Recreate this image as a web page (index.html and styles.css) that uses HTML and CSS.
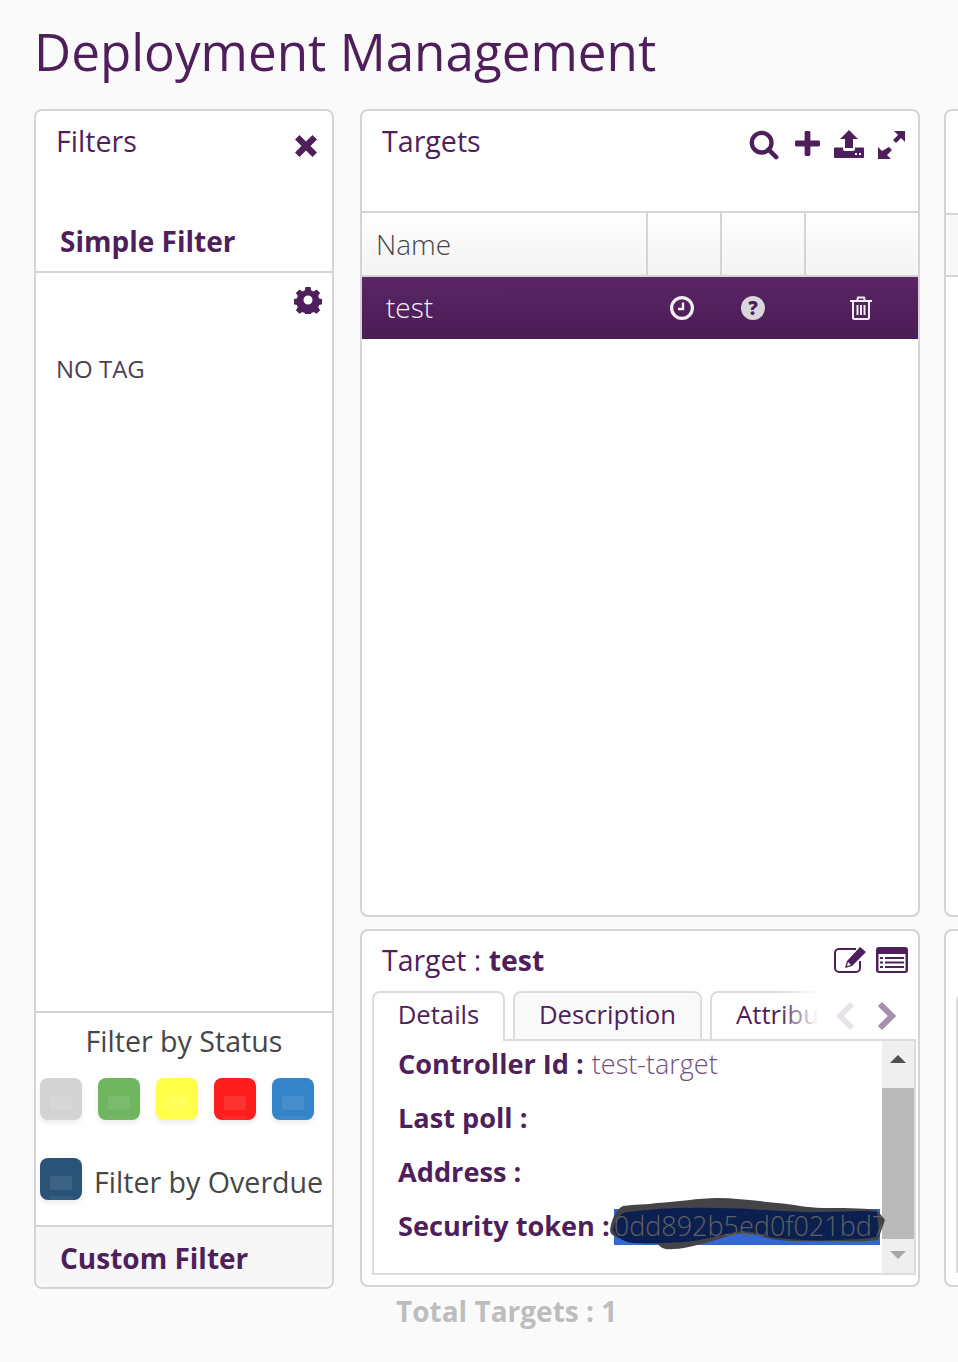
FILE: index.html
```html
<!DOCTYPE html>
<html lang="en">
<head>
<meta charset="utf-8">
<title>Deployment Management</title>
<link rel="stylesheet" href="styles.css">
</head>
<body>
<div class="page">
  <h1 class="title">Deployment Management</h1>
  <div class="layout">
    <section class="panel filters">
      <div class="filters-head">
        <span class="panel-title">Filters</span>
        <svg class="ic-close" viewBox="0 0 24 24"><path fill="#4f1f5c" d="M5.500 1 12 7.500 18.500 1 23 5.500 16.500 12 23 18.500 18.500 23 12 16.500 5.500 23 1 18.500 7.500 12 1 5.500z"/></svg>
      </div>
      <div class="simple-head">Simple Filter</div>
      <div class="tag-area">
        <div class="gear-row">
          <svg class="ic-gear" viewBox="0 0 28 28"><path fill="#4f1f5c" fill-rule="evenodd" d="M11.500 1h5l.8 3.500 2.300 1 3-1.900 3.500 3.500-1.900 3 1 2.300 3.300.8v5l-3.300.8-1 2.300 1.900 3-3.500 3.500-3-1.900-2.300 1-.8 3.400h-5l-.8-3.400-2.300-1-3 1.900-3.500-3.500 1.900-3-1-2.300-3.300-.8v-5l3.300-.8 1-2.300-1.900-3 3.500-3.500 3 1.900 2.300-1zM14 9.500a4.500 4.500 0 1 0 0 9 4.500 4.500 0 0 0 0-9z"/></svg>
        </div>
        <div class="no-tag">NO TAG</div>
      </div>
      <div class="status-area">
        <div class="status-title">Filter by Status</div>
        <div class="swatches">
          <span class="swatch sw-grey"></span>
          <span class="swatch sw-green"></span>
          <span class="swatch sw-yellow"></span>
          <span class="swatch sw-red"></span>
          <span class="swatch sw-blue"></span>
        </div>
        <div class="overdue">
          <span class="swatch sw-navy"></span>
          <span class="overdue-label">Filter by Overdue</span>
        </div>
      </div>
      <div class="custom-head">Custom Filter</div>
    </section>

    <div class="middle">
      <section class="panel targets">
        <div class="targets-head">
          <span class="panel-title">Targets</span>
          <div class="tools">
            <svg class="ic-t ic-search" viewBox="0 0 32 32"><circle cx="13.500" cy="13.500" r="10.500" fill="none" stroke="#4f1f5c" stroke-width="4.600"/><path d="M21 21l8 8" stroke="#4f1f5c" stroke-width="4.800" stroke-linecap="round"/></svg>
            <svg class="ic-t ic-plus" viewBox="0 0 26 26"><path fill="#4f1f5c" d="M10 1.500a1.500 1.500 0 0 1 1.500-1.500h3a1.500 1.500 0 0 1 1.500 1.500V10h8.500A1.500 1.500 0 0 1 26 11.500v3a1.500 1.500 0 0 1-1.500 1.500H16v8.500a1.500 1.500 0 0 1-1.500 1.500h-3a1.500 1.500 0 0 1-1.500-1.500V16H1.500A1.500 1.500 0 0 1 0 14.500v-3A1.500 1.500 0 0 1 1.500 10H10z"/></svg>
            <svg class="ic-t ic-upload" viewBox="0 0 30 28"><path fill="#4f1f5c" fill-rule="evenodd" d="M15 0l9 9h-5v9h-8V9H6zM0 18.500a1 1 0 0 1 1-1h8v1.500a2 2 0 0 0 2 2h8a2 2 0 0 0 2-2v-1.500h8a1 1 0 0 1 1 1V27a1 1 0 0 1-1 1H1a1 1 0 0 1-1-1zM21 23v2h2v-2zM25 23v2h2v-2z"/></svg>
            <svg class="ic-t ic-expand" viewBox="0 0 28 28"><path fill="#4f1f5c" d="M17 0h11v11l-4-4-5 5-3-3 5-5zM12 16l3 3-5 5 4 4H1V16l4 4z"/></svg>
          </div>
        </div>
        <div class="table-head">
          <div class="th th-name">Name</div>
          <div class="th th-a"></div>
          <div class="th th-b"></div>
          <div class="th th-c"></div>
        </div>
        <div class="row">
          <div class="cell-name">test</div>
          <div class="cell-a">
            <svg class="ic-r" viewBox="0 0 24 24"><circle cx="12" cy="12" r="10.400" fill="none" stroke="#f2eef3" stroke-width="3.200"/><path d="M13 6.500V13H8" fill="none" stroke="#f2eef3" stroke-width="2.400"/></svg>
          </div>
          <div class="cell-b">
            <svg class="ic-r" viewBox="0 0 24 24"><circle cx="12" cy="12" r="12" fill="#dad6dc"/><text x="12" y="18.500" text-anchor="middle" class="q-mark">?</text></svg>
          </div>
          <div class="cell-c">
            <svg class="ic-trash" viewBox="0 0 22 24"><path fill="none" stroke="#f4eff5" stroke-width="2" d="M0 5h22M3 5v16.500a1.500 1.500 0 0 0 1.500 1.500h13a1.500 1.500 0 0 0 1.500-1.500V5M7 5l1-3.500h6L15 5"/><path stroke="#f4eff5" stroke-width="2" d="M7.500 9v10M11 9v10M14.500 9v10"/></svg>
          </div>
        </div>
      </section>

      <section class="panel details">
        <div class="details-head">
          <span class="details-title">Target : <b>test</b></span>
          <div class="details-tools">
            <svg class="ic-edit" viewBox="0 0 32 26"><path fill="none" stroke="#4f1f5c" stroke-width="2" d="M26 14v7a4 4 0 0 1-4 4H5a4 4 0 0 1-4-4V6a4 4 0 0 1 4-4h17"/><path fill="#4f1f5c" d="M26 0l6 5-14 14-7 2 2-7zM14 15l-1 4 4-1z"/></svg>
            <svg class="ic-list" viewBox="0 0 32 26"><rect width="32" height="26" rx="3" fill="#4f1f5c"/><rect x="2.500" y="7" width="27" height="17" fill="#fff"/><path stroke="#4f1f5c" stroke-width="2" d="M4 11h3M9 11h19M4 15.500h3M9 15.500h19M4 20h3M9 20h19"/></svg>
          </div>
        </div>
        <div class="tabs">
          <div class="tab tab-active">Details</div>
          <div class="tab tab-desc">Description</div>
          <div class="tab tab-attr">Attributes</div>
          <div class="tab-fade"></div>
          <svg class="chev chev-l" viewBox="0 0 20 30"><path fill="none" stroke="#e9e2eb" stroke-width="6" d="M17 3 5 15l12 12"/></svg>
          <svg class="chev chev-r" viewBox="0 0 20 30"><path fill="none" stroke="#a68eaf" stroke-width="6" d="M3 3l12 12L3 27"/></svg>
        </div>
        <div class="content">
          <div class="fields">
            <div class="field"><b>Controller Id :</b> <span class="value">test-target</span></div>
            <div class="field"><b>Last poll :</b></div>
            <div class="field"><b>Address :</b></div>
            <div class="field"><b>Security token :</b><span class="token"><svg class="blot" viewBox="0 0 276 56"><path fill="#444448" d="M0 32C2 18 8 10 13 8c12-2 24-1 34-3 20-1 42-5 60-5 20 0 40 3 60 5 16 1 30 5 46 5 18 0 38 0 54 2l8 10-7 20c-14 2-28 1-41 1-20 0-40 1-60-1-12-1-22-7-34-7-16 2-30 9-46 12-8 2-16 4-24 4-6 1-12 0-16-6C4 42 1 38 0 32z"/><path fill="#0b2050" d="M3 32C5 22 10 15 17 14c30-4 60-5 90-4 36 0 70 5 106 4 18 0 36-2 54 0l2 24c-14 4-28 3-42 4-20 1-40 0-60-2-12-1-22-7-34-7-20 2-38 10-60 11-16 1-32 2-50 1-10-1-18-7-20-14z"/></svg><span class="token-text">0dd892b5ed0f021bd7</span></span></div>
          </div>
          <div class="scrollbar">
            <div class="sb-btn"><span class="arrow-up"></span></div>
            <div class="sb-thumb"></div>
            <div class="sb-btn sb-btn-down"><span class="arrow-down"></span></div>
          </div>
        </div>
      </section>
      <div class="total">Total Targets : 1</div>
    </div>

    <div class="right">
      <section class="panel right-top">
        <div class="right-line"></div>
      </section>
      <section class="panel right-bottom">
        <div class="right-inner"></div>
      </section>
    </div>
  </div>
</div>
</body>
</html>
```
FILE: styles.css
```css
* { box-sizing: border-box; }
html, body { margin: 0; padding: 0; }
body {
  background: #fafafa;
  font-family: "Open Sans", sans-serif;
  color: #4f1f5c;
}
.page {
  width: 958px;
  height: 1362px;
  overflow: hidden;
  padding-left: 34px;
}
.title {
  margin: 0;
  height: 109px;
  padding: 18px 0 0 0;
  font-size: 51.2px;
  line-height: 66px;
  font-weight: 400;
  color: #4f1f5c;
  white-space: nowrap;
}
.layout { display: flex; gap: 26px; align-items: flex-start; }
.panel {
  background: #fff;
  border: 2px solid #d4d4d4;
  border-radius: 8px;
}
.panel-title { font-size: 28.6px; line-height: 38px; }

/* Filters */
.filters {
  width: 300px;
  height: 1180px;
  flex: none;
  display: flex;
  flex-direction: column;
  overflow: hidden;
}
.filters-head {
  height: 101px;
  padding: 11px 14px 0 20px;
  display: flex;
  justify-content: space-between;
}
.ic-close { width: 24px; height: 24px; margin-top: 12px; }
.simple-head {
  height: 61px;
  padding: 10px 0 0 24px;
  font-size: 28px;
  line-height: 38px;
  font-weight: 700;
  border-bottom: 2px solid #d4d4d4;
}
.tag-area { height: 740px; border-bottom: 2px solid #d4d4d4; }
.gear-row { display: flex; justify-content: flex-end; padding: 13px 10px 0 0; height: 69px; }
.ic-gear { width: 28px; height: 28px; }
.no-tag { padding-left: 20px; margin-top: 10px; font-size: 24px; line-height: 33px; color: #4f3f55; }
.status-area { height: 212px; }
.status-title { margin-top: 9px; text-align: center; font-size: 28.6px; line-height: 38px; color: #464646; }
.swatches { display: flex; gap: 16px; padding-left: 4px; margin-top: 18px; }
.swatch {
  display: block;
  position: relative;
  width: 42px;
  height: 42px;
  flex: none;
  border-radius: 8px;
  box-shadow: 0 3px 5px rgba(0,0,0,.08);
  overflow: hidden;
}
.swatch::after {
  content: "";
  position: absolute;
  left: 10px;
  top: 18px;
  width: 22px;
  height: 14px;
  border-radius: 2px;
  background: rgba(255,255,255,.09);
}
.swatch::before {
  content: "";
  position: absolute;
  left: 9px;
  bottom: 0;
  width: 24px;
  height: 4px;
  background: rgba(255,255,255,.05);
}
.sw-grey { background: #d3d3d3; }
.sw-green { background: #70b55f; }
.sw-yellow { background: #ffff4a; }
.sw-red { background: #ff1e1e; }
.sw-blue { background: #3583c8; }
.sw-navy { background: #295478; }
.overdue { display: flex; gap: 12px; padding-left: 4px; margin-top: 38px; }
.overdue-label { font-size: 28.6px; line-height: 38px; color: #464646; padding-top: 5px; white-space: nowrap; }
.custom-head {
  flex: 1;
  padding: 12px 0 0 24px;
  background: #f7f7f7;
  border-top: 2px solid #d4d4d4;
  font-size: 28px;
  line-height: 38px;
  font-weight: 700;
}

/* Targets */
.middle { width: 560px; flex: none; display: flex; flex-direction: column; }
.targets { height: 808px; overflow: hidden; }
.targets-head {
  height: 102px;
  padding: 11px 13px 0 20px;
  display: flex;
  justify-content: space-between;
  border-bottom: 2px solid #d4d4d4;
}
.tools { display: flex; align-items: flex-start; }
.ic-search { width: 30px; height: 30px; margin-top: 8px; }
.ic-plus { width: 25px; height: 25px; margin: 9px 0 0 16px; }
.ic-upload { width: 30px; height: 28px; margin: 8px 0 0 14px; }
.ic-expand { width: 28px; height: 28px; margin: 9px 0 0 13px; }
.table-head {
  display: flex;
  height: 64px;
  background: linear-gradient(#fefefe, #f3f3f3);
  border-bottom: 2px solid #d4d4d4;
}
.th { border-right: 2px solid #d4d4d4; height: 62px; }
.th-name { width: 286px; padding: 12px 0 0 14px; font-size: 28px; line-height: 38px; font-weight: 300; color: #474747; }
.th-a { width: 74px; }
.th-b { width: 84px; }
.th-c { flex: 1; border-right: 0; }
.row {
  display: flex;
  align-items: center;
  height: 62px;
  background: linear-gradient(#5b2566, #4a1d55);
  color: #f3eff4;
}
.cell-name { width: 308px; padding: 0 0 2px 24px; font-size: 28px; line-height: 38px; font-weight: 300; }
.cell-a { width: 71px; }
.cell-b { width: 109px; }
.cell-c { flex: 1; }
.ic-r { display: block; width: 24px; height: 24px; }
.q-mark { font-family: "Open Sans", sans-serif; font-weight: 800; font-size: 19px; fill: #4f1f5c; }
.ic-trash { display: block; width: 22px; height: 24px; }

/* Details */
.details { height: 358px; margin-top: 12px; display: flex; flex-direction: column; padding: 0 2px 0 10px; }
.details-head { height: 60px; padding: 10px 8px 0 10px; display: flex; justify-content: space-between; }
.details-title { font-size: 28.4px; line-height: 38px; }
.details-title b { font-weight: 700; }
.details-tools { display: flex; gap: 10px; padding-top: 6px; }
.ic-edit, .ic-list { width: 32px; height: 26px; }
.tabs { position: relative; display: flex; gap: 8px; height: 50px; overflow: hidden; margin-right: -2px; }
.tab {
  height: 52px;
  border: 2px solid #dcdcdc;
  border-radius: 8px 8px 0 0;
  background: #f9f9f9;
  font-size: 25.7px;
  line-height: 44px;
  text-align: center;
  font-weight: 400;
  flex: none;
  color: #4f1f5c;
}
.tab-active { width: 133px; background: #fff; position: relative; z-index: 1; }
.tab-desc { width: 189px; }
.tab-attr { width: 200px; padding-left: 24px; text-align: left; background: #fff; }
.tab-fade {
  position: absolute;
  left: 408px;
  top: 0;
  right: 0;
  bottom: 2px;
  background: linear-gradient(90deg, rgba(255,255,255,0), #fff 38px);
}
.chev { position: absolute; width: 20px; height: 30px; top: 10px; }
.chev-l { left: 463px; }
.chev-r { left: 505px; }
.content {
  position: relative;
  z-index: 0;
  flex: none;
  height: 236px;
  margin-top: -2px;
  border: 2px solid #dcdcdc;
  background: #fff;
  display: flex;
  justify-content: space-between;
}
.fields { flex: 1; min-width: 0; padding: 4px 0 0 24px; }
.field { height: 54px; font-size: 27.15px; line-height: 37px; white-space: nowrap; color: #4f1f5c; }
.field b { font-weight: 700; }
.value { font-size: 27px; font-weight: 300; color: #70507a; margin-left: 1px; }
.token {
  position: relative;
  display: inline-block;
  vertical-align: top;
  width: 268px;
  height: 37px;
  margin-left: 4px;
  font-size: 27px;
}
.token::before {
  content: "";
  position: absolute;
  left: 0;
  top: 2px;
  width: 266px;
  height: 36px;
  background: #3367d1;
}
.token-text {
  position: relative;
  z-index: 2;
  display: block;
  width: 268px;
  overflow: hidden;
  color: #606060;
  font-weight: 300;
}
.blot { position: absolute; z-index: 1; left: -4px; top: -9px; width: 276px; height: 56px; }
.scrollbar { width: 32px; flex: none; background: #efefef; display: flex; flex-direction: column; }
.sb-btn { height: 47px; display: flex; justify-content: center; padding-top: 14px; flex: none; }
.sb-btn-down { height: 34px; padding-top: 12px; }
.sb-thumb { height: 151px; background: #bababa; flex: none; }
.arrow-up { width: 0; height: 0; border-left: 8px solid transparent; border-right: 8px solid transparent; border-bottom: 8px solid #505050; }
.arrow-down { width: 0; height: 0; border-left: 8px solid transparent; border-right: 8px solid transparent; border-top: 8px solid #a8a8a8; }
.total { margin-top: 6px; padding-left: 36px; font-size: 28px; line-height: 37px; font-weight: 700; color: #bdbdbd; }

/* Right clipped column */
.right { width: 400px; flex: none; display: flex; flex-direction: column; margin-left: -2px; }
.right-top { height: 808px; position: relative; }
.right-line { height: 64px; margin-top: 102px; background: #f8f8f8; border-top: 2px solid #d4d4d4; border-bottom: 2px solid #d4d4d4; }
.right-bottom { height: 358px; margin-top: 12px; padding: 62px 0 0 10px; }
.right-inner { height: 280px; border: 2px solid #dcdcdc; border-radius: 8px 0 0 0; }
```
